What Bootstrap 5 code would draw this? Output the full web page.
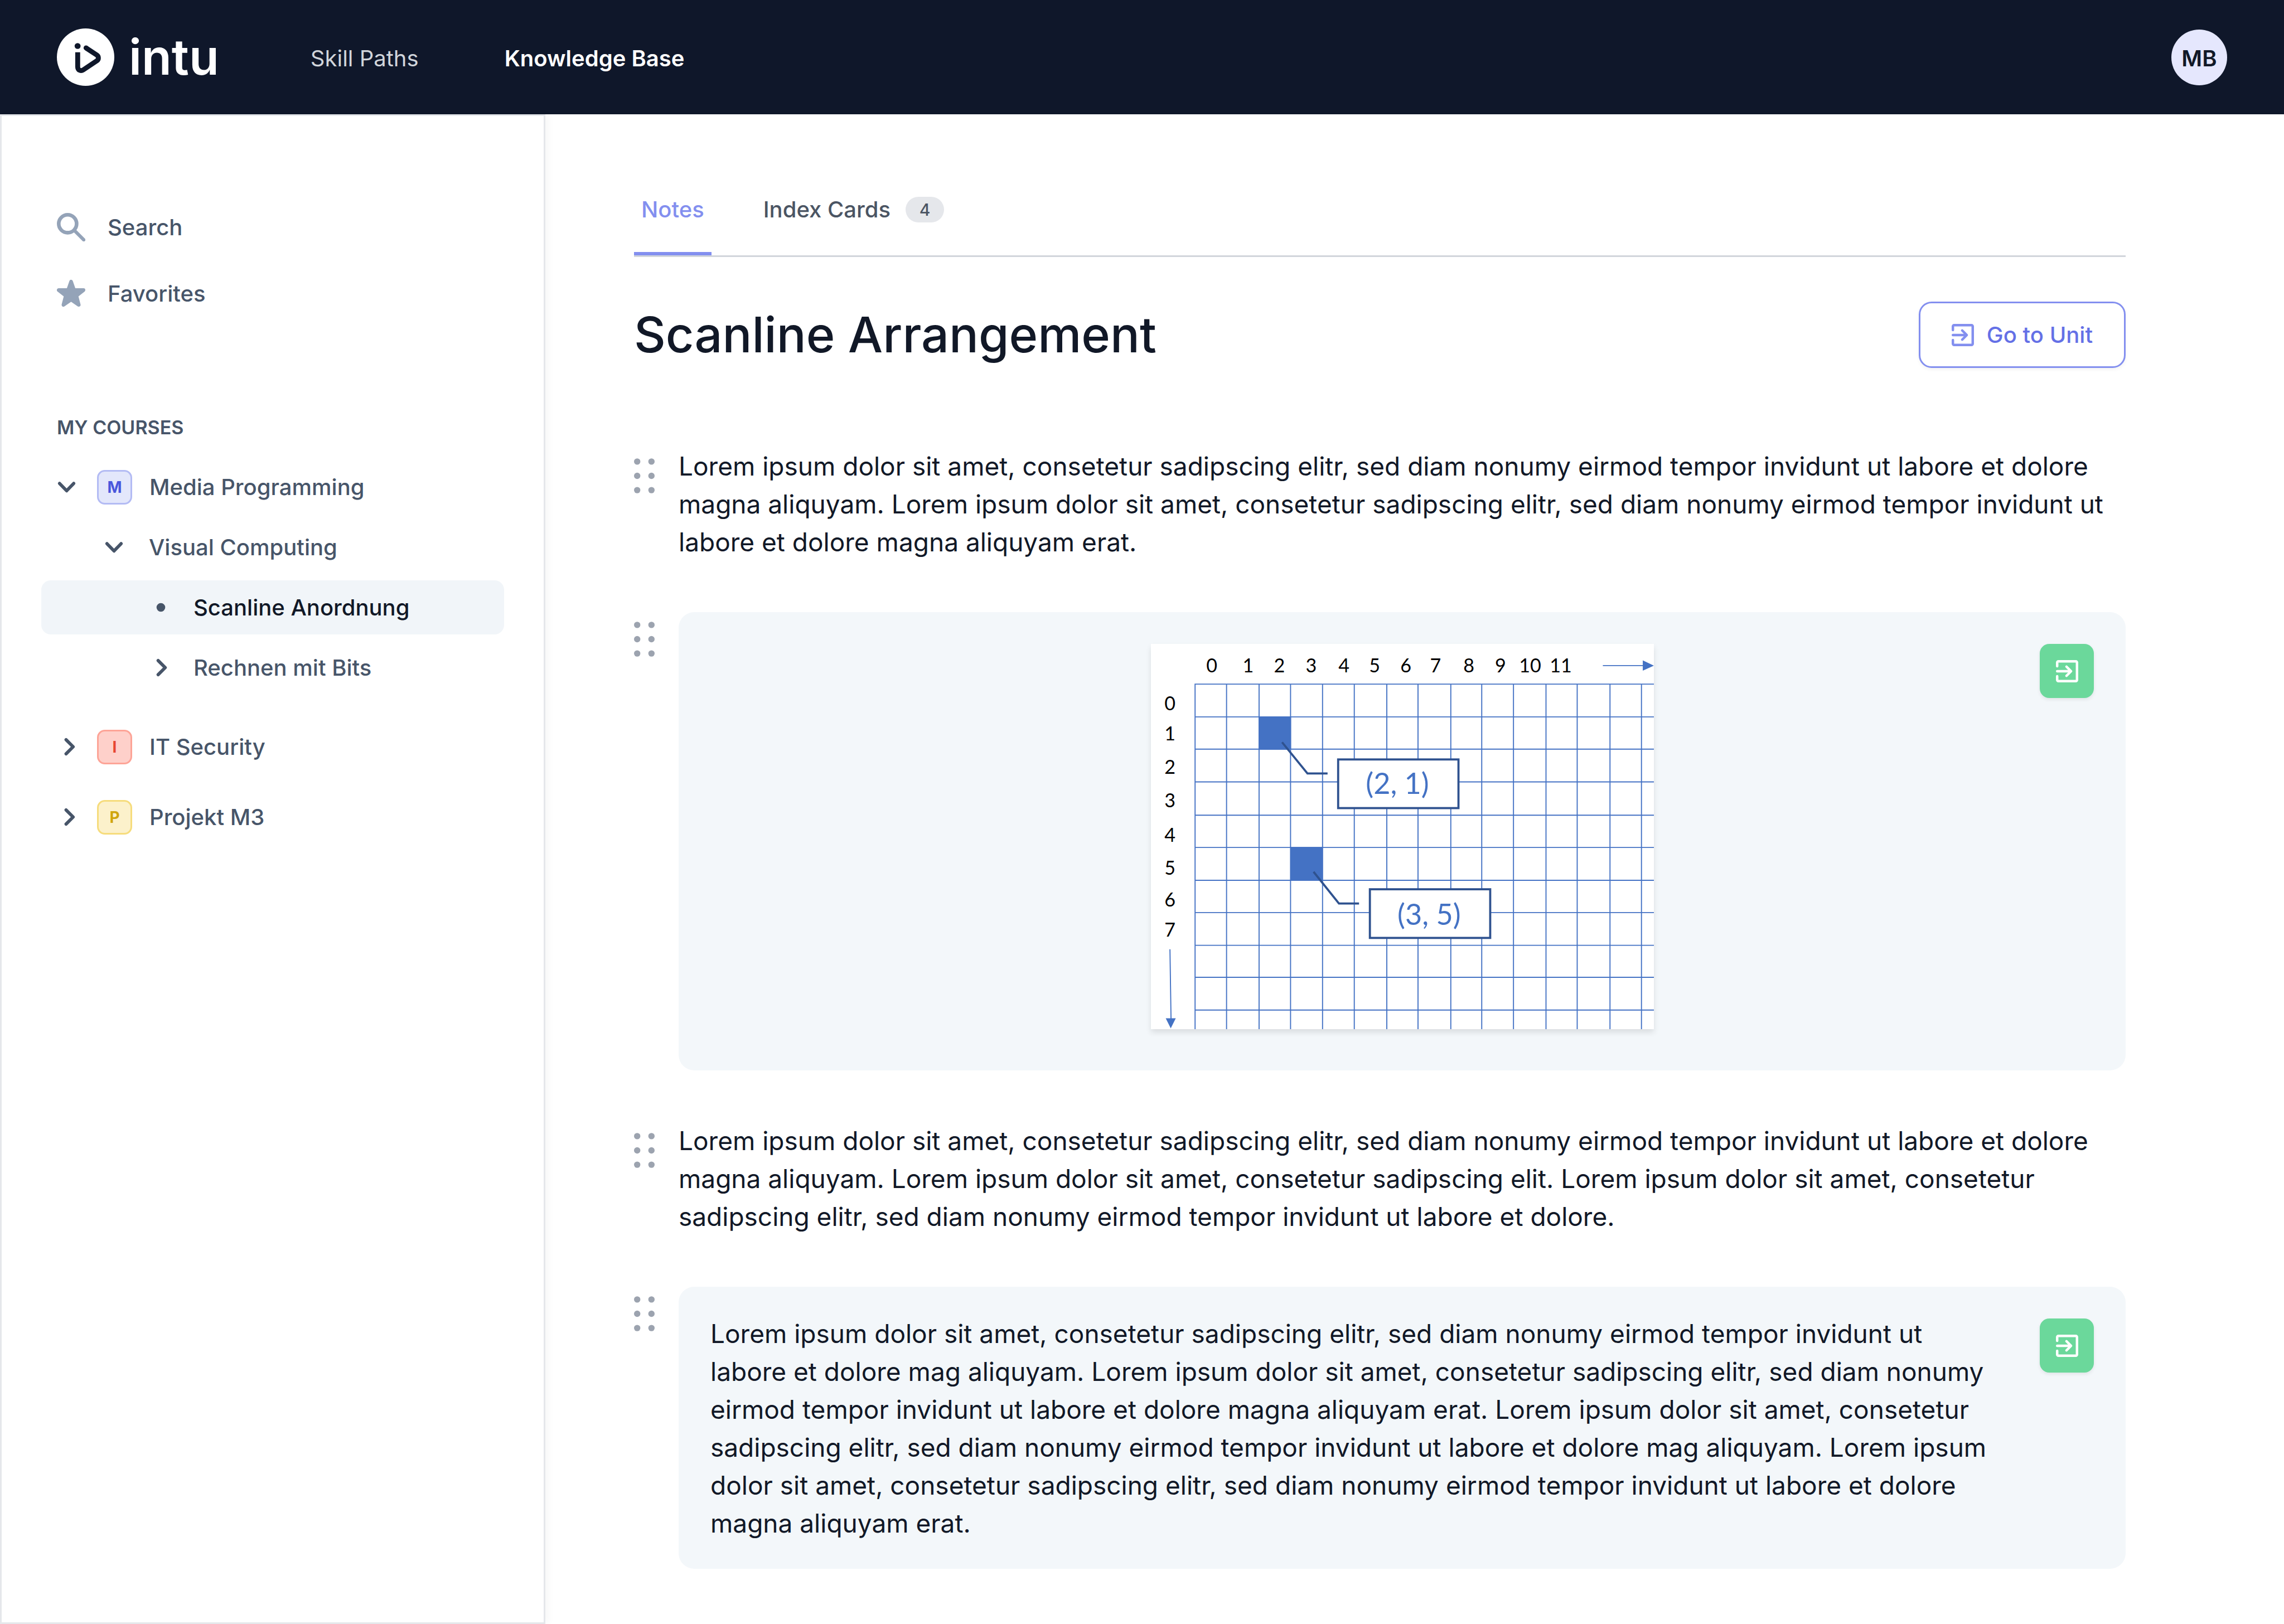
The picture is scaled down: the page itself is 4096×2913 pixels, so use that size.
<!DOCTYPE html>
<html lang="en">
<head>
<meta charset="utf-8">
<meta name="viewport" content="width=device-width, initial-scale=1">
<title>intu – Knowledge Base</title>
<link href="https://cdn.jsdelivr.net/npm/bootstrap@5.3.0/dist/css/bootstrap.min.css" rel="stylesheet">
<style>
  body { font-family: Inter, "Liberation Sans", sans-serif; font-size: 40px; line-height: 56px; color: #111827; background: #fff; }
  svg { display: block; flex: none; }

  /* Top bar */
  .topbar { background: #0f172a; padding: 51px 102px; height: 205px; }
  .brand-name { font-size: 88px; line-height: 103px; font-weight: 600; color: #fff; margin-left: 26px; }
  .main-nav { gap: 154px; margin-left: 164px; padding-top: 4px; }
  .main-nav .nav-link { padding: 0; color: #d1d5db; }
  .main-nav .nav-link.active { color: #fff; font-weight: 600; }
  .avatar { width: 100px; height: 100px; background: #e5e7fd; color: #111827; font-weight: 600; border: 0; padding: 4px 0 0; }

  /* Sidebar */
  .side { width: 978px; border: 3px solid #e5e7eb; padding: 151px 71px 71px; box-shadow: 6px 0 12px rgba(0, 0, 0, .03); font-weight: 500; }
  .side-row { display: flex; align-items: center; width: 100%; height: 97px; padding: 0 28px; border: 0; border-radius: 17px; background: none; color: #475569; text-decoration: none; text-align: left; font-weight: 500; }
  .side-row.current { background: #f1f5f9; color: #111827; }
  .side-row.level-2 { padding-left: 113px; }
  .side-row.level-3 { padding-left: 197px; }
  .level-2 .row-label { margin-left: 45px; }
  .level-3 .row-label { margin-left: 41px; }
  .shortcuts { gap: 22px; }
  .shortcuts .row-label { margin-left: 40px; }
  .side-title { font-size: 34px; line-height: 48px; font-weight: 600; color: #475569; margin: 168px 0 34px; padding-left: 28px; }
  .tree, .tree ul { gap: 11px; }
  .tree ul { margin-top: 11px; }
  .course + .course { margin-top: 18px; }
  .course + .course.after-open { margin-top: 34px; }
  .initial { width: 63px; height: 62px; border: 3px solid; border-radius: 14px; margin: 0 31px 0 37px; font-size: 28px; font-weight: 700; display: flex; align-items: center; justify-content: center; }
  .initial-m { color: #4a56dc; background: #e3e7fb; border-color: #b3bbf4; }
  .initial-i { color: #e74632; background: #fed0ca; border-color: #fda497; }
  .initial-p { color: #d0a50c; background: #fcf1cb; border-color: #f6dc7c; }

  /* Main column */
  .content { padding: 143px 284px 98px 159px; min-width: 0; }
  .note-tabs { border-bottom: 3px solid #d1d5db; gap: 80px; font-weight: 500; }
  .note-tabs .nav-link { display: flex; align-items: center; padding: 0 13px 48px; border-bottom: 6px solid transparent; border-radius: 0; color: #4b5563; }
  .note-tabs .nav-link.active { color: #838fef; border-bottom-color: #838fef; }
  .count { font-size: 30px; line-height: 46px; width: 69px; border-radius: 23px; background: #e5e7eb; color: #4b5563; text-align: center; margin-left: 27px; }
  .title-row { margin-top: 80px; }
  .page-title { font-size: 88px; line-height: 119px; font-weight: 500; color: #111827; }
  .btn-unit { --bs-btn-color: #6470e6; --bs-btn-border-color: #838fef; --bs-btn-hover-bg: #6470e6; --bs-btn-hover-color: #fff; font-size: 40px; line-height: 56px; font-weight: 500; height: 119px; padding: 0 56px; border-width: 3px; border-radius: 23px; gap: 23px; box-shadow: 0 3px 6px rgba(0, 0, 0, .05); }
  .btn-unit svg { color: #838fef; }
  .notes { margin-top: 142px; gap: 92px; font-size: 46px; line-height: 68px; }
  .note { gap: 43px; }
  .note p { margin: 0; }
  .grip { border: 0; padding: 0; background: none; color: #9ca3af; margin-top: 20px; flex: none; width: 37px; }
  .boxed .grip { margin-top: 17px; }
  .panel { background: #f3f7fa; border-radius: 28px; padding: 57px 57px 74px; }
  .panel-text { padding: 50px 57px 48px; }
  .panel-text .btn-open { margin: 7px 0 0 84px; }
  .panel-side { flex: 1 1 0; }
  .btn-open { width: 97px; height: 97px; flex: none; padding: 0; border: 0; border-radius: 17px; background: #6bd89b; color: #fff; box-shadow: 0 3px 6px rgba(0, 0, 0, .08); display: flex; align-items: center; justify-content: center; }
  .sheet { width: 902px; max-width: 100%; background: #fff; box-shadow: 0 6px 10px rgba(0, 0, 0, .1); }
  .sheet svg { width: 100%; height: auto; }
  .sheet text { font-family: Lato, "Liberation Sans", sans-serif; text-anchor: middle; }
</style>
</head>
<body class="d-flex flex-column min-vh-100">

<svg width="0" height="0" class="position-absolute" aria-hidden="true">
  <symbol id="i-enter" viewBox="0 0 18 18">
    <g fill="none" stroke="currentColor" stroke-width="2" stroke-linecap="round" stroke-linejoin="round">
      <path d="M1 5V2a1 1 0 0 1 1-1H16a1 1 0 0 1 1 1V16a1 1 0 0 1-1 1H2a1 1 0 0 1-1-1V13"/>
      <path d="M1 9H11.500M8.500 5.300L12.200 9L8.500 12.700"/>
    </g>
  </symbol>
  <symbol id="i-down" viewBox="0 0 36 36">
    <path d="M5 11.500L18 25L31 11.500" fill="none" stroke="currentColor" stroke-width="6" stroke-linecap="round" stroke-linejoin="round"/>
  </symbol>
  <symbol id="i-right" viewBox="0 0 36 36">
    <path d="M17 5L30 18L17 31" fill="none" stroke="currentColor" stroke-width="6" stroke-linecap="round" stroke-linejoin="round"/>
  </symbol>
  <symbol id="i-right-in" viewBox="0 0 36 36">
    <path d="M13 5L26 18L13 31" fill="none" stroke="currentColor" stroke-width="6" stroke-linecap="round" stroke-linejoin="round"/>
  </symbol>
  <symbol id="i-grip" viewBox="0 0 39 66">
    <g fill="currentColor">
      <circle cx="6" cy="6" r="6"/><circle cx="33" cy="6" r="6"/>
      <circle cx="6" cy="33" r="6"/><circle cx="33" cy="33" r="6"/>
      <circle cx="6" cy="60" r="6"/><circle cx="33" cy="60" r="6"/>
    </g>
  </symbol>
</svg>

<header class="topbar d-flex align-items-center">
  <a href="#" class="d-flex align-items-center text-decoration-none">
    <svg width="103" height="103" viewBox="0 0 327 327" aria-hidden="true">
      <circle cx="163.500" cy="163.500" r="163.500" fill="#fff"/>
      <g fill="#0f172a">
        <circle cx="118" cy="100" r="17"/>
        <circle cx="166" cy="111" r="14"/>
      </g>
      <path d="M118.500 136V218C118.500 240 138 244 150 236L228 184C239 176 239 160 228 152L166 111" fill="none" stroke="#0f172a" stroke-width="28"/>
    </svg>
    <span class="brand-name">intu</span>
  </a>
  <nav class="nav main-nav" aria-label="Main">
    <a class="nav-link" href="#">Skill Paths</a>
    <a class="nav-link active" aria-current="page" href="#">Knowledge Base</a>
  </nav>
  <button type="button" class="avatar rounded-circle ms-auto" aria-label="Account MB">MB</button>
</header>

<div class="d-flex flex-grow-1">
  <aside class="side flex-shrink-0">
    <nav class="shortcuts d-flex flex-column" aria-label="Shortcuts">
      <a class="side-row" href="#">
        <svg width="51" height="51" viewBox="0 0 54 54" fill="none" stroke="#94a3b8" aria-hidden="true">
          <circle cx="20.500" cy="20.500" r="17" stroke-width="7"/>
          <path d="M33 33L51 51" stroke-width="6.500" stroke-linecap="round"/>
        </svg>
        <span class="row-label">Search</span>
      </a>
      <a class="side-row" href="#">
        <svg width="51" height="51" viewBox="0 0 54 54" fill="#94a3b8" stroke="#94a3b8" stroke-width="7" stroke-linejoin="round" aria-hidden="true">
          <path d="M27 4.500L32.500 20.500H50.500L37 31L41.500 48.500L27 38.500L12.500 48.500L17 31L3.500 20.500H21.500Z"/>
        </svg>
        <span class="row-label">Favorites</span>
      </a>
    </nav>

    <h2 class="side-title text-uppercase">My Courses</h2>
    <ul class="tree list-unstyled d-flex flex-column mb-0">
      <li class="course">
        <button type="button" class="side-row" aria-expanded="true">
          <svg width="35" height="35" aria-hidden="true"><use href="#i-down"/></svg>
          <span class="initial initial-m">M</span>
          <span>Media Programming</span>
        </button>
        <ul class="list-unstyled d-flex flex-column">
          <li>
            <button type="button" class="side-row level-2" aria-expanded="true">
              <svg width="35" height="35" aria-hidden="true"><use href="#i-down"/></svg>
              <span class="row-label">Visual Computing</span>
            </button>
          </li>
          <li>
            <a class="side-row level-3 current" aria-current="page" href="#">
              <svg width="35" height="35" viewBox="0 0 36 36" aria-hidden="true"><circle cx="18" cy="18" r="8" fill="#475569"/></svg>
              <span class="row-label">Scanline Anordnung</span>
            </a>
          </li>
          <li>
            <button type="button" class="side-row level-3" aria-expanded="false">
              <svg width="35" height="35" aria-hidden="true"><use href="#i-right-in"/></svg>
              <span class="row-label">Rechnen mit Bits</span>
            </button>
          </li>
        </ul>
      </li>
      <li class="course after-open">
        <button type="button" class="side-row" aria-expanded="false">
          <svg width="35" height="35" aria-hidden="true"><use href="#i-right"/></svg>
          <span class="initial initial-i">I</span>
          <span>IT Security</span>
        </button>
      </li>
      <li class="course">
        <button type="button" class="side-row" aria-expanded="false">
          <svg width="35" height="35" aria-hidden="true"><use href="#i-right"/></svg>
          <span class="initial initial-p">P</span>
          <span>Projekt M3</span>
        </button>
      </li>
    </ul>
  </aside>

  <main class="content flex-grow-1">
    <ul class="nav note-tabs">
      <li class="nav-item"><a class="nav-link active" aria-current="page" href="#">Notes</a></li>
      <li class="nav-item"><a class="nav-link" href="#">Index Cards <span class="count">4</span></a></li>
    </ul>

    <div class="title-row d-flex align-items-center justify-content-between">
      <h1 class="page-title mb-0">Scanline Arrangement</h1>
      <button type="button" class="btn btn-unit d-flex align-items-center">
        <svg width="40" height="40" aria-hidden="true"><use href="#i-enter"/></svg>
        Go to Unit
      </button>
    </div>

    <div class="notes d-flex flex-column">
      <div class="note d-flex align-items-start">
        <button type="button" class="grip" aria-label="Move note"><svg width="37" height="63" aria-hidden="true"><use href="#i-grip"/></svg></button>
        <p>Lorem ipsum dolor sit amet, consetetur sadipscing elitr, sed diam nonumy eirmod tempor invidunt ut labore et dolore magna aliquyam. Lorem ipsum dolor sit amet, consetetur sadipscing elitr, sed diam nonumy eirmod tempor invidunt ut labore et dolore magna aliquyam erat.</p>
      </div>

      <div class="note boxed d-flex align-items-start">
        <button type="button" class="grip" aria-label="Move note"><svg width="37" height="63" aria-hidden="true"><use href="#i-grip"/></svg></button>
        <div class="panel flex-grow-1 d-flex align-items-start">
          <div class="panel-side"></div>
          <figure class="sheet mb-0">
            <svg viewBox="0 0 951 729" role="img" aria-label="Pixel grid with scanline coordinates">
              <path stroke="#4472c4" stroke-width="2" fill="none" d="M83.500 75V729M143 76V729M204.500 76V729M264 76V729M324.500 76V729M384.500 76V729M446 76V729M505 76V729M567 76V729M625.500 76V729M685.500 76V729M747 76V729M806 76V729M868 76V729M927.500 76V729M83 76H951M83 138H951M83 199H951M83 261H951M83 324H951M83 385H951M83 447H951M83 508H951M83 570H951M83 630.500H951M83 692.500H951"/>
              <path fill="#4472c4" d="M204 137H265V200H204ZM264 384H325V448H264ZM930 31L951 41L930 50.500ZM28 708H47L37.500 727Z"/>
              <path stroke="#4472c4" stroke-width="2" d="M854.500 41H932M36 577.500L38 709"/>
              <path stroke="#2f528f" stroke-width="4" fill="none" d="M248 186L296 245H334M307.500 431L355.500 491H393.500"/>
              <rect x="354" y="218.500" width="227.500" height="92" fill="#fff" stroke="#2f528f" stroke-width="4"/>
              <rect x="414" y="464" width="227.500" height="92" fill="#fff" stroke="#2f528f" stroke-width="4"/>
              <g font-size="55" fill="#4472c4">
                <text x="466" y="284">(2, 1)</text>
                <text x="526" y="531">(3, 5)</text>
              </g>
              <g font-size="36" fill="#000">
                <text x="115" y="54">0</text><text x="184" y="54">1</text><text x="243" y="54">2</text><text x="303" y="54">3</text><text x="365" y="54">4</text><text x="423" y="54">5</text><text x="482" y="54">6</text><text x="538" y="54">7</text><text x="601" y="54">8</text><text x="661" y="54">9</text><text x="717" y="54">10</text><text x="775" y="54">11</text>
                <text x="36" y="125">0</text><text x="36" y="182">1</text><text x="36" y="246">2</text><text x="36" y="309">3</text><text x="36" y="374">4</text><text x="36" y="437">5</text><text x="36" y="497">6</text><text x="36" y="554">7</text>
              </g>
            </svg>
          </figure>
          <div class="panel-side d-flex justify-content-end">
            <button type="button" class="btn-open" aria-label="Open unit"><svg width="40" height="40" aria-hidden="true"><use href="#i-enter"/></svg></button>
          </div>
        </div>
      </div>

      <div class="note d-flex align-items-start">
        <button type="button" class="grip" aria-label="Move note"><svg width="37" height="63" aria-hidden="true"><use href="#i-grip"/></svg></button>
        <p>Lorem ipsum dolor sit amet, consetetur sadipscing elitr, sed diam nonumy eirmod tempor invidunt ut labore et dolore magna aliquyam. Lorem ipsum dolor sit amet, consetetur sadipscing elit. Lorem ipsum dolor sit amet, consetetur sadipscing elitr, sed diam nonumy eirmod tempor invidunt ut labore et dolore.</p>
      </div>

      <div class="note boxed d-flex align-items-start">
        <button type="button" class="grip" aria-label="Move note"><svg width="37" height="63" aria-hidden="true"><use href="#i-grip"/></svg></button>
        <div class="panel panel-text flex-grow-1 d-flex align-items-start justify-content-between">
          <p>Lorem ipsum dolor sit amet, consetetur sadipscing elitr, sed diam nonumy eirmod tempor invidunt ut labore et dolore mag aliquyam. Lorem ipsum dolor sit amet, consetetur sadipscing elitr, sed diam nonumy eirmod tempor invidunt ut labore et dolore magna aliquyam erat. Lorem ipsum dolor sit amet, consetetur sadipscing elitr, sed diam nonumy eirmod tempor invidunt ut labore et dolore mag aliquyam. Lorem ipsum dolor sit amet, consetetur sadipscing elitr, sed diam nonumy eirmod tempor invidunt ut labore et dolore magna aliquyam erat.</p>
          <button type="button" class="btn-open" aria-label="Open unit"><svg width="40" height="40" aria-hidden="true"><use href="#i-enter"/></svg></button>
        </div>
      </div>
    </div>
  </main>
</div>

<script src="https://cdn.jsdelivr.net/npm/bootstrap@5.3.0/dist/js/bootstrap.bundle.min.js"></script>
</body>
</html>
